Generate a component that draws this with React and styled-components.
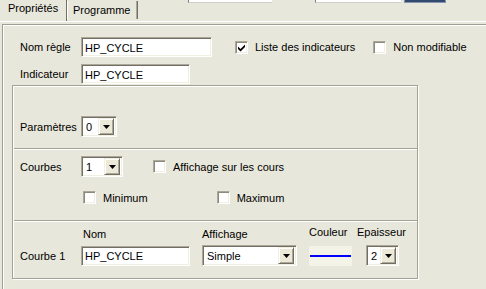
import React from 'react'
import styled, { createGlobalStyle } from 'styled-components'

const GlobalStyle = createGlobalStyle`
    html, body {
        margin: 0;
        padding: 0;
        background: #e8e7db;
    }
    body {
        width: 486px;
        height: 289px;
        overflow: hidden;
        font-family: "Liberation Sans", Arial, sans-serif;
        font-size: 11px;
        color: #000;
    }
`

function Check({ checked }) {
    return (
        <CheckBox>
            {checked && (
                <svg width="9" height="9" viewBox="0 0 9 9">
                    <path d="M1 3.5 L3.5 6 L8 1.5 L8 4 L3.5 8.5 L1 6 Z" fill="#000" />
                </svg>
            )}
        </CheckBox>
    )
}

function Select({ value, width }) {
    return (
        <SelectBox width={width}>
            <SelectValue>{value}</SelectValue>
            <DropButton>
                <svg width="7" height="4" viewBox="0 0 7 4">
                    <path d="M0 0 H7 L3.5 4 Z" fill="#000" />
                </svg>
            </DropButton>
        </SelectBox>
    )
}

function App() {
    return (
        <Page>
            <GlobalStyle />
            <Header>
                <Tabs>
                    <Tab active>Propriétés</Tab>
                    <Tab>Programme</Tab>
                </Tabs>
                <Stub left={50} width={84} />
                <Stub left={43} width={86} />
                <BlueStub />
            </Header>
            <Panel>
                <TopRow>
                    <Label width={61}>Nom règle</Label>
                    <Input width={131} value="HP_CYCLE" readOnly />
                    <CheckItem left={23}>
                        <Check checked />
                        <span>Liste des indicateurs</span>
                    </CheckItem>
                    <CheckItem left={18}>
                        <Check />
                        <span>Non modifiable</span>
                    </CheckItem>
                </TopRow>
                <TopRow gap={7}>
                    <Label width={61}>Indicateur</Label>
                    <Input width={109} value="HP_CYCLE" readOnly />
                </TopRow>
                <InnerGroup>
                    <Section height={63} pad={30}>
                        <Row>
                            <Label width={61}>Paramètres</Label>
                            <Select value="0" width={36} />
                        </Row>
                    </Section>
                    <Section height={72} pad={7}>
                        <Row>
                            <Label width={61}>Courbes</Label>
                            <Select value="1" width={42} />
                            <CheckItem left={30}>
                                <Check />
                                <span>Affichage sur les cours</span>
                            </CheckItem>
                        </Row>
                        <SubRow>
                            <CheckItem left={63}>
                                <Check />
                                <span>Minimum</span>
                            </CheckItem>
                            <CheckItem left={69}>
                                <Check />
                                <span>Maximum</span>
                            </CheckItem>
                        </SubRow>
                    </Section>
                    <Section last height={57} pad={5}>
                        <Headings>
                            <Heading left={63} width={119}>Nom</Heading>
                            <Heading width={107}>Affichage</Heading>
                            <Heading width={48} up>Couleur</Heading>
                            <Heading up>Epaisseur</Heading>
                        </Headings>
                        <Row>
                            <Label width={61}>Courbe 1</Label>
                            <Input width={109} value="HP_CYCLE" readOnly />
                            <Spacer width={12} />
                            <Select value="Simple" width={95} />
                            <Spacer width={12} />
                            <Swatch>
                                <SwatchLine />
                            </Swatch>
                            <Spacer width={14} />
                            <Select value="2" width={33} />
                        </Row>
                    </Section>
                </InnerGroup>
            </Panel>
        </Page>
    )
}

export default App

const Page = styled.div`
    width: 486px;
    height: 289px;
    display: flex;
    flex-direction: column;
`

const Header = styled.div`
    height: 21px;
    display: flex;
    align-items: flex-start;
    border-bottom: 1px solid #ffffff;
`

const Tabs = styled.div`
    display: flex;
    height: 21px;
    align-items: flex-end;
`

const Tab = styled.div`
    box-sizing: border-box;
    height: ${p => (p.active ? '21px' : '18px')};
    padding: ${p => (p.active ? '2px 7px 0 8px' : '3px 5px 0 5px')};
    margin-bottom: ${p => (p.active ? '0' : '2px')};
    border-left: ${p => (p.active ? 'none' : '1px solid #ffffff')};
    border-right: 1px solid #716f64;
    box-shadow: ${p => (p.active ? 'none' : 'inset -1px 0 0 #aca899')};
    white-space: nowrap;
    width: ${p => (p.active ? '67px' : '71px')};
`

const Stub = styled.div`
    box-sizing: border-box;
    margin-left: ${p => p.left}px;
    width: ${p => p.width}px;
    height: 3px;
    background: #ffffff;
    border-left: 1px solid #7f7e72;
    border-bottom: 1px solid #d4d0c8;
`

const BlueStub = styled.div`
    box-sizing: border-box;
    margin-left: 3px;
    width: 42px;
    height: 3px;
    background: #334a70;
    border: 1px solid #8594ae;
    border-top: none;
`

const Panel = styled.div`
    flex: 1;
    box-sizing: border-box;
    margin: 2px 0 0 2px;
    border-top: 1px solid #9f9e90;
    border-left: 1px solid #9f9e90;
    box-shadow: inset 1px 1px 0 #ffffff;
    padding: 12px 0 0 9px;
    display: flex;
    flex-direction: column;
`

const TopRow = styled.div`
    display: flex;
    align-items: center;
    height: 20px;
    padding-left: 8px;
    margin-top: ${p => p.gap || 0}px;
`

const Row = styled.div`
    display: flex;
    align-items: center;
    height: 21px;
`

const SubRow = styled.div`
    display: flex;
    align-items: center;
    height: 13px;
    margin-top: 14px;
`

const Label = styled.div`
    width: ${p => p.width}px;
    white-space: nowrap;
`

const Input = styled.input`
    box-sizing: border-box;
    width: ${p => p.width}px;
    height: 20px;
    margin: 0;
    padding: 1px 2px 0 3px;
    font-family: "Liberation Sans", Arial, sans-serif;
    font-size: 11px;
    color: #000;
    background: #ffffff;
    border: 1px solid;
    border-color: #aca899 #ffffff #ffffff #aca899;
    box-shadow: inset 1px 1px 0 #716f64, inset -1px -1px 0 #f1efe2;
    outline: none;
`

const CheckItem = styled.div`
    display: flex;
    align-items: center;
    gap: 7px;
    margin-left: ${p => p.left || 0}px;
    white-space: nowrap;
`

const CheckBox = styled.div`
    box-sizing: border-box;
    width: 13px;
    height: 13px;
    background: #ffffff;
    border: 1px solid;
    border-color: #aca899 #ffffff #ffffff #aca899;
    box-shadow: inset 1px 1px 0 #8a897c, inset -1px -1px 0 #f1efe2;
    display: flex;
    align-items: center;
    justify-content: center;
`

const InnerGroup = styled.div`
    box-sizing: border-box;
    width: 406px;
    margin-top: 1px;
    border: 1px solid #a3a294;
    box-shadow: inset 1px 1px 0 #ffffff, 1px 1px 0 #ffffff;
    display: flex;
    flex-direction: column;
    padding-left: 7px;
`

const Section = styled.div`
    box-sizing: border-box;
    height: ${p => p.height}px;
    padding-top: ${p => p.pad}px;
    margin-left: -6px;
    padding-left: 6px;
    border-bottom: ${p => (p.last ? 'none' : '1px solid #a3a294')};
    box-shadow: ${p => (p.last ? 'none' : '0 1px 0 #ffffff')};
`

const SelectBox = styled.div`
    box-sizing: border-box;
    width: ${p => p.width}px;
    height: 21px;
    background: #ffffff;
    border: 1px solid;
    border-color: #aca899 #ffffff #ffffff #aca899;
    box-shadow: inset 1px 1px 0 #716f64, inset -1px -1px 0 #f1efe2;
    display: flex;
    align-items: center;
    padding: 2px;
`

const SelectValue = styled.div`
    flex: 1;
    padding-left: 2px;
    white-space: nowrap;
    overflow: hidden;
`

const DropButton = styled.div`
    box-sizing: border-box;
    width: 16px;
    height: 17px;
    background: #ece9d8;
    border: 1px solid;
    border-color: #f1efe2 #716f64 #716f64 #f1efe2;
    box-shadow: inset 1px 1px 0 #ffffff, inset -1px -1px 0 #aca899;
    display: flex;
    align-items: center;
    justify-content: center;
`

const Headings = styled.div`
    display: flex;
    height: 14px;
    align-items: flex-end;
    margin-bottom: 5px;
`

const Heading = styled.div`
    margin-left: ${p => p.left || 0}px;
    width: ${p => (p.width ? `${p.width}px` : 'auto')};
    white-space: nowrap;
    position: relative;
    top: ${p => (p.up ? '-2px' : '0')};
`

const Spacer = styled.div`
    width: ${p => p.width}px;
    flex: none;
`

const Swatch = styled.div`
    width: 43px;
    height: 20px;
    background: #f4f3e8;
    display: flex;
    align-items: center;
    justify-content: center;
`

const SwatchLine = styled.div`
    width: 41px;
    height: 2px;
    background: #0000ff;
`
